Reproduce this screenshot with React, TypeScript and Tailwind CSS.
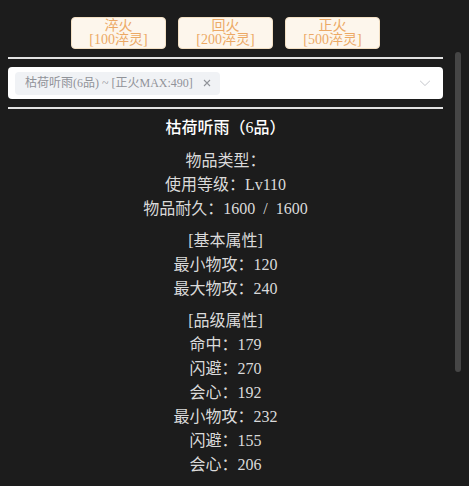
import React from "react";

const F = "font-['Liberation_Serif','Noto_Sans_CJK_SC',serif]";

function Btn({ a, b }: { a: string; b: string }) {
  return (
    <div className="w-[95px] h-[32px] rounded-[4px] border border-[#f3e0c4] bg-[#fdf6ec] text-[#eca965] text-[14px] leading-[14px] flex flex-col items-center justify-center">
      <span>{a}</span>
      <span>{b}</span>
    </div>
  );
}

function Line({ children, title }: { children: React.ReactNode; title?: boolean }) {
  return (
    <div className={"h-[24px] leading-[24px] text-center text-[16px] whitespace-pre " + (title ? "text-white font-medium" : "text-[#dadada]")}>
      {children}
    </div>
  );
}

export default function App() {
  return (
    <div className={"w-[469px] h-[486px] bg-[#1c1c1c] flex overflow-hidden " + F}>
      <div className="w-[443px] pl-[8px] flex flex-col">
        <div className="flex justify-center gap-[12px] pt-[17px]">
          <Btn a="淬火" b="[100淬灵]" />
          <Btn a="回火" b="[200淬灵]" />
          <Btn a="正火" b="[500淬灵]" />
        </div>
        <div className="h-[2px] bg-[#e2e2e2] mt-[8px]" />
        <div className="h-[32px] mt-[8px] bg-white rounded-[4px] flex items-center pl-[7px] pr-[11px]">
          <div className="h-[23px] rounded-[4px] bg-[#f0f2f5] flex items-center pl-[10px] pr-[8px] text-[12px] text-[#909399]">
            <span className="whitespace-pre">枯荷听雨(6品) ~ [正火MAX:490]</span>
            <svg className="ml-[9px]" width="10" height="10" viewBox="0 0 10 10">
              <path d="M2 2 L8 8 M8 2 L2 8" stroke="#909399" strokeWidth="1.1" fill="none" />
            </svg>
          </div>
          <svg className="ml-auto" width="14" height="14" viewBox="0 0 1024 1024">
            <path
              fill="#c8cacf"
              d="M831.872 340.864 512 652.672 192.128 340.864a30.592 30.592 0 0 0-42.752 0 29.12 29.12 0 0 0 0 41.6L489.664 714.24a32 32 0 0 0 44.672 0l340.288-331.712a29.12 29.12 0 0 0 0-41.728 30.592 30.592 0 0 0-42.752 0z"
            />
          </svg>
        </div>
        <div className="h-[2px] bg-[#e2e2e2] mt-[8px]" />
        <div className="mt-[7px]">
          <Line title>枯荷听雨（6品）</Line>
        </div>
        <div className="mt-[9px]">
          <Line>物品类型：</Line>
          <Line>使用等级：Lv110</Line>
          <Line>{"物品耐久：1600  /  1600"}</Line>
        </div>
        <div className="mt-[8px]">
          <Line>[基本属性]</Line>
          <Line>最小物攻：120</Line>
          <Line>最大物攻：240</Line>
        </div>
        <div className="mt-[8px]">
          <Line>[品级属性]</Line>
          <Line>命中：179</Line>
          <Line>闪避：270</Line>
          <Line>会心：192</Line>
          <Line>最小物攻：232</Line>
          <Line>闪避：155</Line>
          <Line>会心：206</Line>
        </div>
      </div>
      <div className="flex-1 pl-[12px] pt-[52px]">
        <div className="w-[6px] h-[320px] rounded-[3px] bg-[#464646]" />
      </div>
    </div>
  );
}
